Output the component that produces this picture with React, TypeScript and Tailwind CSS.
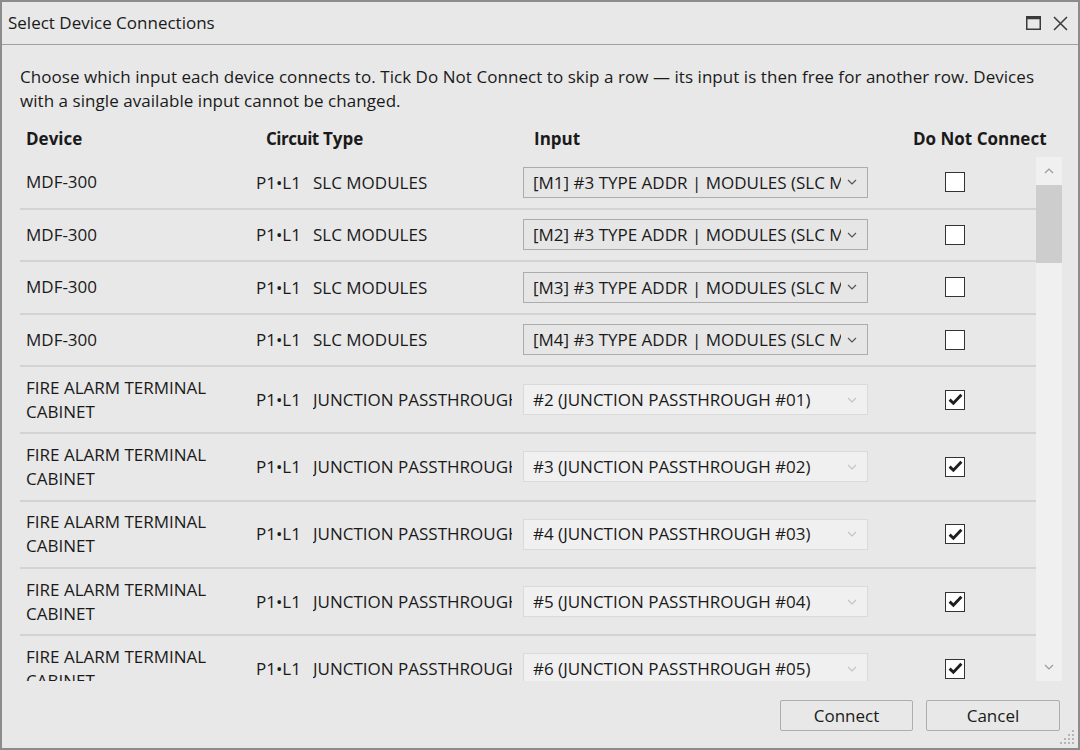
import { Fragment } from "react";

type Row = {
    device: string[];
    type: string;
    input: string;
    locked: boolean;
};

const rows: Row[] = [
    { device: ["MDF-300"], type: "SLC MODULES", input: "[M1] #3 TYPE ADDR | MODULES (SLC MODULES)", locked: false },
    { device: ["MDF-300"], type: "SLC MODULES", input: "[M2] #3 TYPE ADDR | MODULES (SLC MODULES)", locked: false },
    { device: ["MDF-300"], type: "SLC MODULES", input: "[M3] #3 TYPE ADDR | MODULES (SLC MODULES)", locked: false },
    { device: ["MDF-300"], type: "SLC MODULES", input: "[M4] #3 TYPE ADDR | MODULES (SLC MODULES)", locked: false },
    { device: ["FIRE ALARM TERMINAL", "CABINET"], type: "JUNCTION PASSTHROUGH", input: "#2 (JUNCTION PASSTHROUGH #01)", locked: true },
    { device: ["FIRE ALARM TERMINAL", "CABINET"], type: "JUNCTION PASSTHROUGH", input: "#3 (JUNCTION PASSTHROUGH #02)", locked: true },
    { device: ["FIRE ALARM TERMINAL", "CABINET"], type: "JUNCTION PASSTHROUGH", input: "#4 (JUNCTION PASSTHROUGH #03)", locked: true },
    { device: ["FIRE ALARM TERMINAL", "CABINET"], type: "JUNCTION PASSTHROUGH", input: "#5 (JUNCTION PASSTHROUGH #04)", locked: true },
    { device: ["FIRE ALARM TERMINAL", "CABINET"], type: "JUNCTION PASSTHROUGH", input: "#6 (JUNCTION PASSTHROUGH #05)", locked: true },
    { device: ["FIRE ALARM TERMINAL", "CABINET"], type: "JUNCTION PASSTHROUGH", input: "#7 (JUNCTION PASSTHROUGH #06)", locked: true },
];

const Chevron = ({ color, up }: { color: string; up?: boolean }) => (
    <svg width="10" height="6" viewBox="0 0 10 6" className={up ? "rotate-180" : ""}>
        <path d="M1 1 L5 5 L9 1" fill="none" stroke={color} strokeWidth="1.2" />
    </svg>
);

const Checkbox = ({ checked }: { checked: boolean }) => (
    <div className="w-[20px] h-[20px] bg-white border border-[#333333] flex items-center justify-center">
        {checked && (
            <svg width="15" height="13" viewBox="0 0 15 13">
                <path d="M1.6 6.6 L5.4 10.3 L13.4 1.8" fill="none" stroke="#1f1f1f" strokeWidth="2.9" />
            </svg>
        )}
    </div>
);

const InputSelect = ({ value, locked }: { value: string; locked: boolean }) => (
    <div
        className={`w-[345px] h-[31px] flex items-center pl-[9px] pr-[10px] border ${
            locked ? "bg-[#f0f0f0] border-[#dadada]" : "bg-[#e6e6e6] border-[#acacac]"
        }`}
    >
        <span className="flex-1 overflow-hidden whitespace-nowrap text-[#1a1a1a]">{value}</span>
        <span className="ml-[6px]">
            <Chevron color={locked ? "#c4c4c4" : "#555555"} />
        </span>
    </div>
);

const DeviceRow = ({ row }: { row: Row }) => (
    <div
        className={`flex items-center pl-[6px] border-b-2 border-[#d3d3d3] shrink-0 ${
            row.device.length > 1 ? "h-[67.3px]" : "h-[52.5px]"
        }`}
    >
        <div className="w-[230px] leading-[24px]">
            {row.device.map((line, i) => (
                <div key={i} className="whitespace-nowrap">{line}</div>
            ))}
        </div>
        <div className="w-[57px] whitespace-nowrap">P1•L1</div>
        <div className="w-[199px] overflow-hidden whitespace-nowrap">{row.type}</div>
        <div className="ml-[11px]">
            <InputSelect value={row.input} locked={row.locked} />
        </div>
        <div className="ml-[77px]">
            <Checkbox checked={row.locked} />
        </div>
    </div>
);

const ResizeGrip = () => {
    const dots: [number, number][] = [];
    for (let r = 0; r < 4; r++) {
        for (let c = 3 - r; c < 4; c++) {
            dots.push([c * 4, r * 4]);
        }
    }
    return (
        <svg width="16" height="16" viewBox="0 0 16 16">
            {dots.map(([x, y], i) => (
                <rect key={i} x={x} y={y} width="2" height="2" fill="#b5b5b5" />
            ))}
        </svg>
    );
};

const App = () => {
    return (
        <div
            className="w-[1080px] h-[750px] border-2 border-[#8c8c8c] bg-[#e8e8e8] flex flex-col text-[17px] text-[#1a1a1a] overflow-hidden"
            style={{ fontFamily: '"Open Sans", "Noto Sans", sans-serif' }}
        >
            {/* title bar */}
            <div className="h-[43px] shrink-0 border-b border-[#a0a0a0] flex items-center pl-[6px] pr-[10px]">
                <span className="flex-1">Select Device Connections</span>
                <div className="flex items-center gap-[12px]">
                    <svg width="15" height="14" viewBox="0 0 15 14">
                        <rect x="0.75" y="0.75" width="13.5" height="12.5" fill="none" stroke="#3a3a3a" strokeWidth="1.5" />
                        <rect x="0.75" y="0.75" width="13.5" height="2.5" fill="#3a3a3a" />
                    </svg>
                    <svg width="15" height="15" viewBox="0 0 15 15">
                        <path d="M1 1 L14 14 M14 1 L1 14" stroke="#3a3a3a" strokeWidth="1.5" />
                    </svg>
                </div>
            </div>

            <div className="flex-1 flex flex-col pl-[18px] pr-[16px] pt-[20px] min-h-0">
                <p className="leading-[24px] whitespace-nowrap tracking-[0.05px]">
                    Choose which input each device connects to. Tick Do Not Connect to skip a row — its input is then free for another row. Devices
                    <br />
                    with a single available input cannot be changed.
                </p>

                {/* header */}
                <div className="flex items-center mt-[14px] h-[24px] font-bold pl-[6px] shrink-0">
                    <div className="w-[240px]">Device</div>
                    <div className="w-[57px] tracking-[-0.5px]">Circuit</div>
                    <div className="w-[211px]">Type</div>
                    <div className="w-[379px]">Input</div>
                    <div className="whitespace-nowrap">Do Not Connect</div>
                </div>

                {/* list */}
                <div className="flex mt-[6px] h-[524px] shrink-0">
                    <div className="w-[1016px] flex flex-col overflow-hidden">
                        {rows.map((row, i) => (
                            <Fragment key={i}>
                                <DeviceRow row={row} />
                            </Fragment>
                        ))}
                    </div>
                    <div className="w-[26px] bg-[#f0f0f0] flex flex-col">
                        <div className="h-[28px] flex items-center justify-center">
                            <Chevron color="#9a9a9a" up />
                        </div>
                        <div className="h-[78px] bg-[#cdcdcd]" />
                        <div className="flex-1" />
                        <div className="h-[28px] flex items-center justify-center">
                            <Chevron color="#9a9a9a" />
                        </div>
                    </div>
                </div>

                {/* footer */}
                <div className="flex justify-end gap-[13px] mt-[19px] pr-[2px]">
                    <button className="w-[133px] h-[31px] border border-[#adadad] rounded-[2px] bg-[#e8e8e8]">Connect</button>
                    <button className="w-[134px] h-[31px] border border-[#adadad] rounded-[2px] bg-[#e8e8e8]">Cancel</button>
                </div>
                <div className="flex justify-end -mr-[14px] mt-[-1px]">
                    <ResizeGrip />
                </div>
            </div>
        </div>
    );
};

export default App;
